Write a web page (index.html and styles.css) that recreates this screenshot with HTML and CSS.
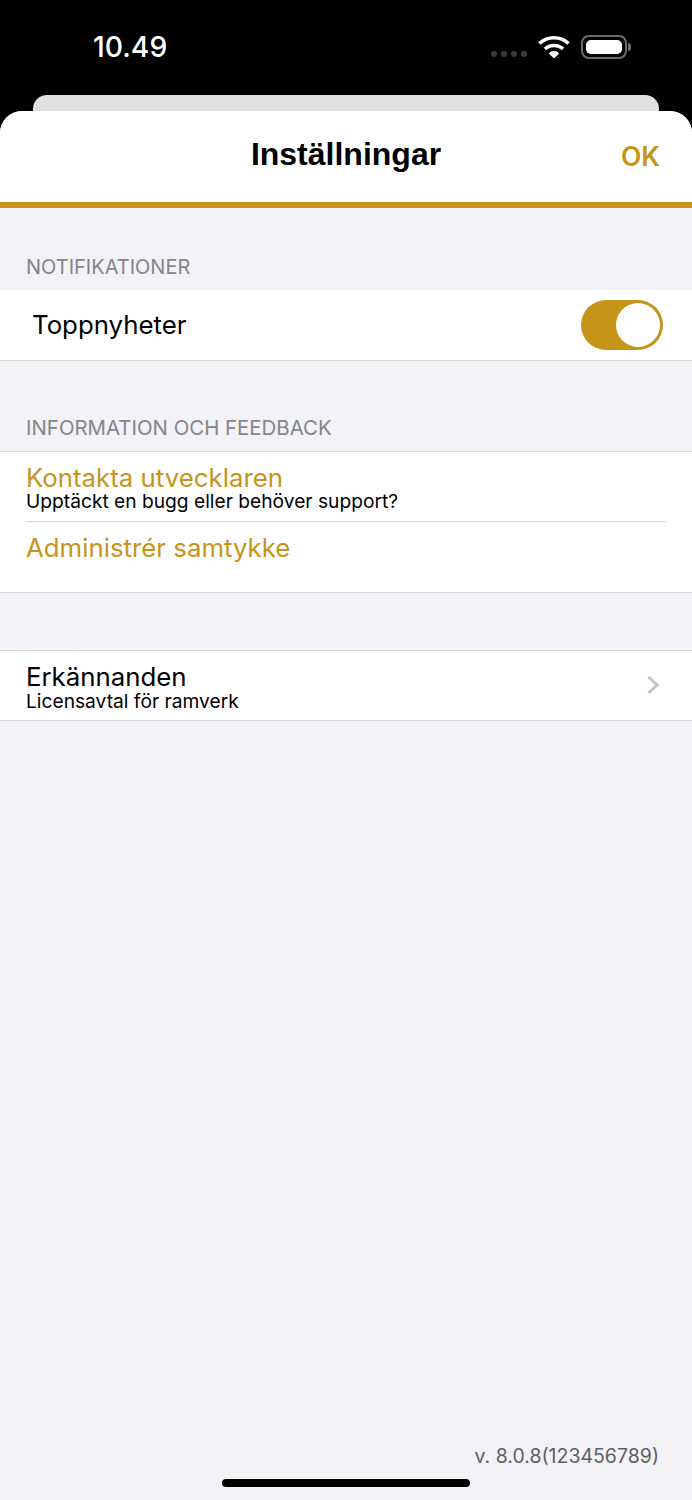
FILE: index.html
```html
<!DOCTYPE html>
<html lang="sv">
<head>
    <meta charset="utf-8">
    <meta name="viewport" content="width=device-width, initial-scale=1.0">
    <title>Inställningar</title>
    <link rel="stylesheet" href="styles.css">
</head>

<body>

    <div class="statusbar">
        <span class="klocka">10.49</span>
        <div class="statusikoner">
            <div class="signal"><i></i><i></i><i></i><i></i></div>
            <svg class="wifi" width="32" height="24" viewBox="0 0 32 24">
                <path d="M1.5 8.5C9.5 0.8 22.5 0.8 30.5 8.5" fill="none" stroke="#fff" stroke-width="3.6"/>
                <path d="M7 14C11.8 9.4 20.2 9.4 25 14" fill="none" stroke="#fff" stroke-width="3.6"/>
                <path d="M10.8 18.4C14 15.3 18 15.3 21.2 18.4L16 23.5Z" fill="#fff"/>
            </svg>
            <div class="batteri"><div class="batteri-fyld"></div></div>
            <div class="batteri-nub"></div>
        </div>
    </div>

    <div class="bagkort"></div>

    <div class="ark">
        <header>
            <h1>Inställningar</h1>
            <span class="ok">OK</span>
        </header>

        <main>
            <h2 class="sektion">NOTIFIKATIONER</h2>
            <div class="gruppe gruppe-top">
                <div class="raekke raekke-toggle">
                    <span class="navn">Toppnyheter</span>
                    <div class="toggle"><div class="knop"></div></div>
                </div>
            </div>

            <h2 class="sektion sektion-to">INFORMATION OCH FEEDBACK</h2>
            <div class="gruppe">
                <div class="raekke">
                    <div class="tekster">
                        <span class="link">Kontakta utvecklaren</span>
                        <span class="under">Upptäckt en bugg eller behöver support?</span>
                    </div>
                </div>
                <div class="raekke raekke-skillet">
                    <div class="tekster">
                        <span class="link">Administrér samtykke</span>
                    </div>
                </div>
            </div>

            <div class="gruppe gruppe-sidst">
                <div class="raekke raekke-pil">
                    <div class="tekster">
                        <span class="navn">Erkännanden</span>
                        <span class="under">Licensavtal för ramverk</span>
                    </div>
                    <svg class="pil" width="14" height="20" viewBox="0 0 14 20">
                        <path d="M2.5 2L11 10L2.5 18" fill="none" stroke="#c4c4c7" stroke-width="3"/>
                    </svg>
                </div>
            </div>

            <p class="version">v. 8.0.8(123456789)</p>
            <div class="homebar"></div>
        </main>
    </div>

</body></html>
```

FILE: styles.css
```css
* {
    box-sizing: border-box;
    font-family: Inter, "Liberation Sans", sans-serif;
}

html, body {
    margin: 0;
    height: 1500px;
    overflow: hidden;
    background-color: #000;
}

.statusbar {
    height: 95px;
    display: flex;
    justify-content: space-between;
    padding: 30px 61px 0 93px;
    color: #fff;
}

.klocka {
    font-size: 28.3px;
    line-height: 34px;
    font-weight: 500;
}

.statusikoner {
    display: flex;
    align-items: flex-start;
    height: 34px;
}

.signal {
    display: flex;
    gap: 4px;
    margin: 21px 11px 0 0;
}

.signal i {
    width: 6px;
    height: 6px;
    border-radius: 50%;
    background-color: #3a3a3a;
}

.wifi {
    margin: 5px 11px 0 0;
}

.batteri {
    width: 46px;
    height: 24px;
    margin-top: 5px;
    padding: 3px;
    border: 2px solid #6b6b6b;
    border-radius: 8px;
}

.batteri-fyld {
    height: 100%;
    background-color: #fff;
    border-radius: 5px;
}

.batteri-nub {
    width: 3px;
    height: 8px;
    margin: 13px 0 0 1px;
    background-color: #6b6b6b;
    border-radius: 0 3px 3px 0;
}

.bagkort {
    height: 16px;
    margin: 0 33px;
    background-color: #e0e0e0;
    border-radius: 14px 14px 0 0;
}

.ark {
    height: 1389px;
    background-color: #f2f2f7;
    border-radius: 22px 22px 0 0;
    overflow: hidden;
}

header {
    height: 97px;
    display: flex;
    align-items: center;
    justify-content: center;
    background-color: #fff;
    border-bottom: 6px solid #c7941a;
    padding-bottom: 4px;
    position: relative;
}

h1 {
    margin: 0;
    font-family: "Liberation Sans", sans-serif;
    font-size: 32px;
    font-weight: 700;
    color: #000;
}

.ok {
    position: absolute;
    right: 32px;
    top: 27px;
    font-size: 26.5px;
    line-height: 36px;
    font-weight: 600;
    color: #c7941a;
}

main {
    height: 1292px;
    position: relative;
}

.sektion {
    margin: 0;
    padding: 47px 26px 0;
    height: 82px;
    font-size: 20px;
    line-height: 24px;
    font-weight: 400;
    color: #85858b;
}

.sektion-to {
    height: 90px;
    padding-top: 55px;
    font-size: 20.4px;
}

.gruppe {
    background-color: #fff;
    border-bottom: 1px solid #d9d9dd;
}

.gruppe-sidst {
    margin-top: 57px;
    border-top: 1px solid #d9d9dd;
}

.gruppe:not(.gruppe-top):not(.gruppe-sidst) {
    border-top: 1px solid #d9d9dd;
}

.raekke {
    height: 69px;
    padding: 13px 26px 0;
    display: flex;
    justify-content: space-between;
}

.raekke-toggle {
    height: 70px;
    padding: 0 29px 0 32px;
    align-items: center;
}

.raekke-skillet {
    height: 71px;
    padding-top: 14px;
    position: relative;
}

.raekke-skillet::before {
    content: "";
    position: absolute;
    left: 26px;
    right: 26px;
    top: 0;
    height: 1px;
    background-color: #d9d9dd;
}

.raekke-pil {
    padding-right: 32px;
}

.tekster {
    display: flex;
    flex-direction: column;
}

.navn {
    font-size: 25.8px;
    line-height: 26px;
    color: #000;
}

.tekster .navn {
    padding-top: 1px;
    line-height: 24px;
    margin-bottom: 2px;
}

.link {
    padding-top: 1px;
    margin-bottom: 1px;
    font-size: 25.8px;
    line-height: 24px;
    color: #c7941a;
}

.under {
    font-size: 19.2px;
    line-height: 20px;
    color: #000;
}

.toggle {
    width: 82px;
    height: 50px;
    background-color: #c7941a;
    border-radius: 25px;
    padding: 3px;
    display: flex;
    justify-content: flex-end;
}

.knop {
    width: 44px;
    height: 44px;
    background-color: #fff;
    border-radius: 50%;
}

.pil {
    margin-top: 11px;
}

.version {
    position: absolute;
    right: 33px;
    top: 1235px;
    margin: 0;
    font-size: 19.5px;
    line-height: 26px;
    color: #5f5f63;
}

.homebar {
    position: absolute;
    left: 222px;
    top: 1271px;
    width: 248px;
    height: 8px;
    background-color: #000;
    border-radius: 4px;
}
```
